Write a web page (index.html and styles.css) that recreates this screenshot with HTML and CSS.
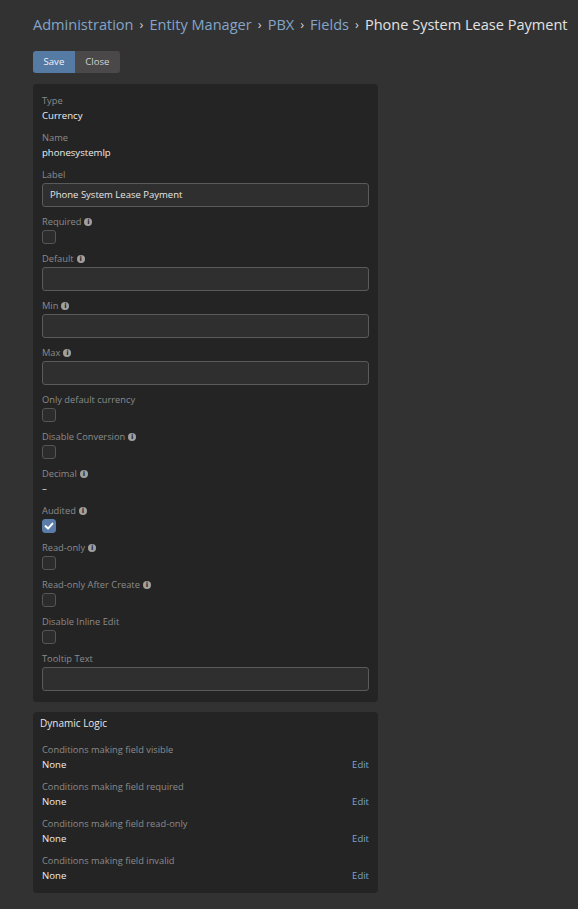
FILE: index.html
```html
<!DOCTYPE html>
<html>
<head>
<meta charset="utf-8">
<link rel="stylesheet" href="styles.css">
</head>
<body>
<div class="page">
  <div class="breadcrumb">
    <a class="crumb">Administration</a><span class="sep">›</span><a class="crumb">Entity Manager</a><span class="sep">›</span><a class="crumb">PBX</a><span class="sep">›</span><a class="crumb">Fields</a><span class="sep">›</span><span class="current">Phone System Lease Payment</span>
  </div>
  <div class="btn-group">
    <button class="btn btn-primary">Save</button><button class="btn btn-default">Close</button>
  </div>

  <div class="panel">
    <div class="cell">
      <div class="label">Type</div>
      <div class="value">Currency</div>
    </div>
    <div class="cell">
      <div class="label">Name</div>
      <div class="value">phonesystemlp</div>
    </div>
    <div class="cell">
      <div class="label">Label</div>
      <div class="input">Phone System Lease Payment</div>
    </div>
    <div class="cell">
      <div class="label">Required <span class="info">i</span></div>
      <div class="checkbox"></div>
    </div>
    <div class="cell">
      <div class="label">Default <span class="info">i</span></div>
      <div class="input"></div>
    </div>
    <div class="cell">
      <div class="label">Min <span class="info">i</span></div>
      <div class="input"></div>
    </div>
    <div class="cell">
      <div class="label">Max <span class="info">i</span></div>
      <div class="input"></div>
    </div>
    <div class="cell">
      <div class="label">Only default currency</div>
      <div class="checkbox"></div>
    </div>
    <div class="cell">
      <div class="label">Disable Conversion <span class="info">i</span></div>
      <div class="checkbox"></div>
    </div>
    <div class="cell">
      <div class="label">Decimal <span class="info">i</span></div>
      <div class="value">–</div>
    </div>
    <div class="cell">
      <div class="label">Audited <span class="info">i</span></div>
      <div class="checkbox checked"><svg viewBox="0 0 14 14" width="14" height="14"><path d="M3 7.2 L5.9 10 L11 4.3" fill="none" stroke="#fff" stroke-width="2.4" stroke-linecap="round" stroke-linejoin="round"/></svg></div>
    </div>
    <div class="cell">
      <div class="label">Read-only <span class="info">i</span></div>
      <div class="checkbox"></div>
    </div>
    <div class="cell">
      <div class="label">Read-only After Create <span class="info">i</span></div>
      <div class="checkbox"></div>
    </div>
    <div class="cell">
      <div class="label">Disable Inline Edit</div>
      <div class="checkbox"></div>
    </div>
    <div class="cell last">
      <div class="label">Tooltip Text</div>
      <div class="input"></div>
    </div>
  </div>

  <div class="panel panel-logic">
    <div class="panel-heading">Dynamic Logic</div>
    <div class="logic-body">
      <div class="logic-row">
        <div class="label">Conditions making field visible</div>
        <div class="logic-line"><span class="value">None</span><a class="edit">Edit</a></div>
      </div>
      <div class="logic-row">
        <div class="label">Conditions making field required</div>
        <div class="logic-line"><span class="value">None</span><a class="edit">Edit</a></div>
      </div>
      <div class="logic-row">
        <div class="label">Conditions making field read-only</div>
        <div class="logic-line"><span class="value">None</span><a class="edit">Edit</a></div>
      </div>
      <div class="logic-row">
        <div class="label">Conditions making field invalid</div>
        <div class="logic-line"><span class="value">None</span><a class="edit">Edit</a></div>
      </div>
    </div>
  </div>
</div>
</body>
</html>
```

FILE: styles.css
```css
html, body {
  margin: 0;
  padding: 0;
  background: #323232;
}
body {
  font-family: "Open Sans", "Liberation Sans", sans-serif;
  color: #d8d8d8;
  width: 578px;
  height: 909px;
  overflow: hidden;
}
.page {
  padding: 13px 0 0 33px;
  width: 345px;
}
.breadcrumb {
  display: flex;
  align-items: center;
  height: 22px;
  font-size: 14.55px;
  line-height: 22px;
  white-space: nowrap;
  color: #e2e2e2;
}
.crumb {
  color: #84a5c9;
}
.sep {
  color: #cfcfcf;
  margin: 0 6px 0 6px;
  font-size: 13px;
}
.btn-group {
  display: flex;
  margin-top: 16px;
}
.btn {
  font-family: "Open Sans", "Liberation Sans", sans-serif;
  font-size: 9.6px;
  height: 22px;
  border: 0;
  margin: 0;
  line-height: 22px;
}
.btn-primary {
  background: #557aa3;
  color: #f0f3f7;
  border-radius: 3px 0 0 3px;
  padding: 0 10.5px;
}
.btn-default {
  background: #4a4848;
  color: #d2d2d2;
  border-radius: 0 3px 3px 0;
  padding: 0 10.5px;
}
.panel {
  margin-top: 11px;
  background: #242424;
  border-radius: 4px;
  padding: 10px 9px 11px 9px;
}
.cell {
  margin-bottom: 8px;
}
.cell.last {
  margin-bottom: 0;
}
.label {
  font-size: 9.3px;
  line-height: 13px;
  height: 13px;
  color: #8b8b8b;
  display: flex;
  align-items: center;
  gap: 3px;
}
.info {
  display: inline-flex;
  width: 8px;
  height: 8px;
  border-radius: 50%;
  background: #a0a0a0;
  color: #242424;
  font-size: 7px;
  font-weight: bold;
  line-height: 8px;
  justify-content: center;
  font-family: "DejaVu Sans", sans-serif;
}
.value {
  font-size: 9.6px;
  line-height: 14px;
  color: #ececec;
  margin-top: 2px;
}
.input {
  margin-top: 2px;
  height: 22px;
  border: 1px solid #5a5a5a;
  border-radius: 3px;
  background: #2f2f2f;
  font-size: 9.5px;
  line-height: 22px;
  color: #e6e6e6;
  padding: 0 7px;
}
.checkbox {
  margin-top: 2px;
  width: 12px;
  height: 12px;
  border: 1px solid #555;
  border-radius: 3px;
  background: #2c2c2c;
}
.checkbox.checked {
  background: #5a7ca8;
  border-color: #5a7ca8;
  display: flex;
  align-items: center;
  justify-content: center;
}
.checkbox.checked svg {
  width: 12px;
  height: 12px;
}
.panel-logic {
  margin-top: 10px;
  padding: 0 9px 10px 9px;
}
.panel-heading {
  font-size: 10px;
  line-height: 14px;
  color: #e6e6e6;
  margin-left: -2px;
  padding: 4px 0 0 0;
}
.logic-body {
  padding-top: 13px;
}
.logic-row {
  margin-bottom: 8px;
}
.logic-row:last-child {
  margin-bottom: 0;
}
.logic-line {
  display: flex;
  justify-content: space-between;
  align-items: center;
  margin-top: 2px;
  line-height: 14px;
}
.logic-line .value {
  margin-top: 0;
}
.edit {
  font-size: 9.5px;
  color: #7ea3c9;
}
```
